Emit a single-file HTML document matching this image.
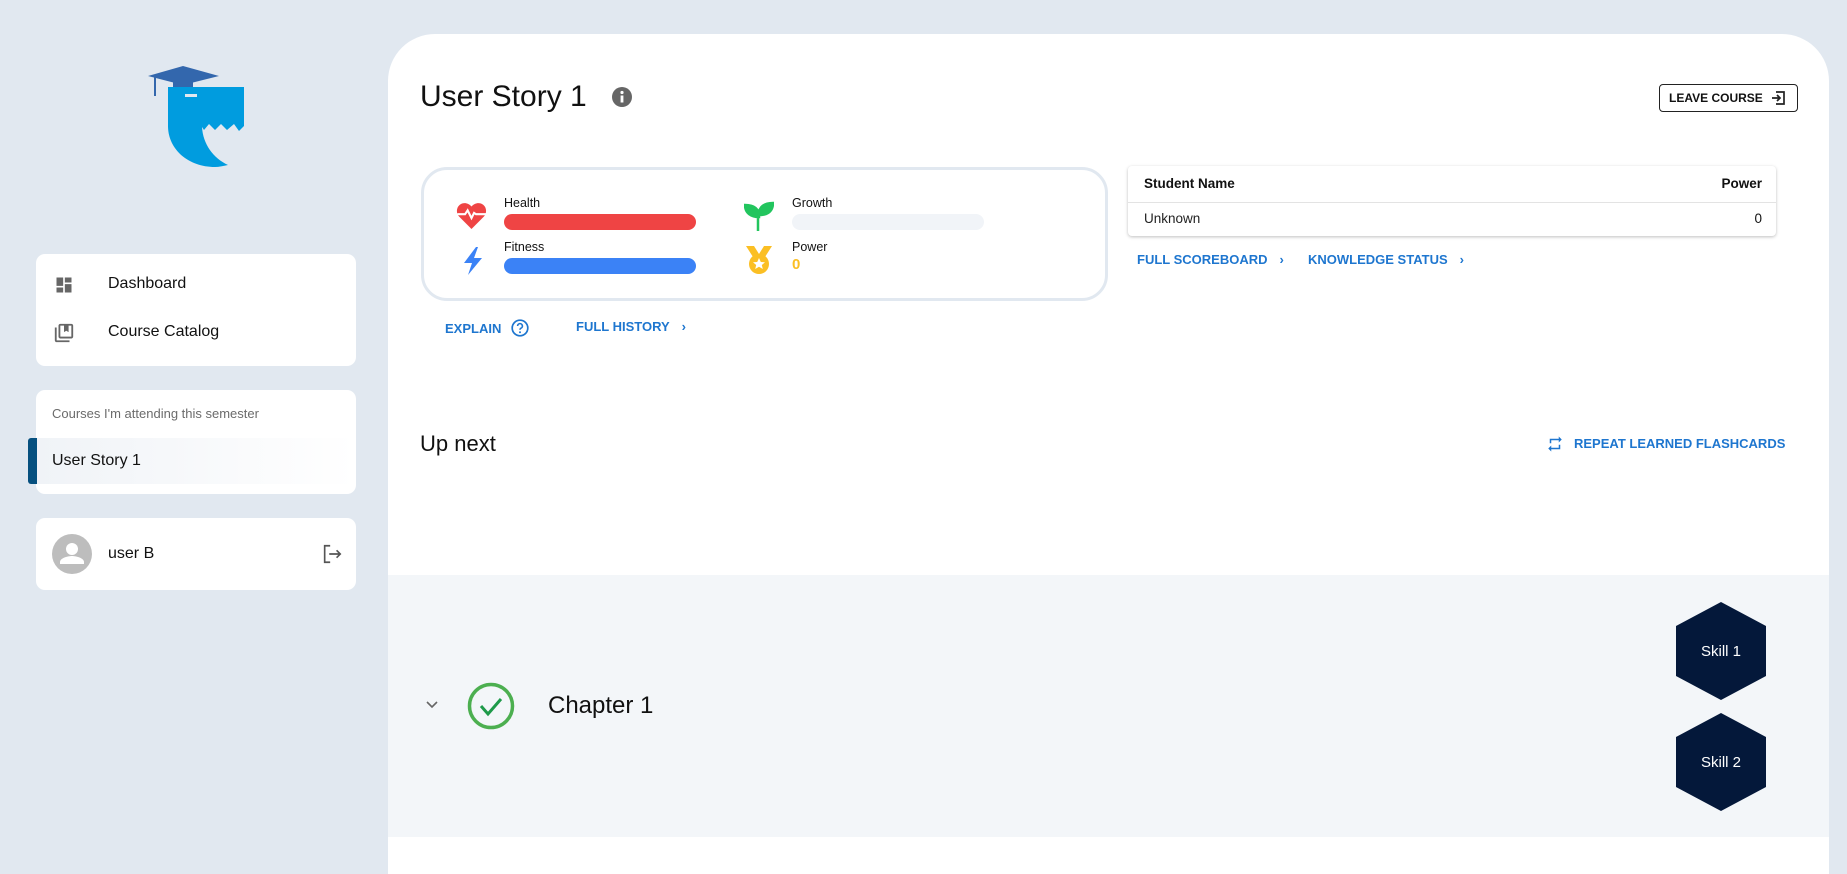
<!DOCTYPE html>
<html><head><meta charset="utf-8"><style>
*{box-sizing:border-box;margin:0;padding:0}
body{width:1847px;height:857px;background:#e1e8f0;font-family:"Liberation Sans",sans-serif;color:#111;position:relative;overflow:hidden}
.abs{position:absolute}
.card{position:absolute;background:#fff;border-radius:9px;left:36px;width:320px}
.nav{position:absolute;left:72px;font-size:16px;color:#111}
.lnk{position:absolute;font-size:13px;font-weight:bold;color:#1e76cf;letter-spacing:0;display:flex;align-items:center;gap:10px}
.lbl{position:absolute;font-size:12.5px;color:#111}
.bar{position:absolute;height:16px;border-radius:8px;width:192px}
</style></head><body>
<svg class="abs" style="left:145px;top:64px" width="102" height="104" viewBox="0 0 102 104">
<polygon points="3,12 38,2 74,12 38,21" fill="#3367ad"/>
<rect x="28" y="12" width="20" height="11" fill="#3367ad"/>
<line x1="10" y1="13" x2="10" y2="32" stroke="#3367ad" stroke-width="2"/>
<path d="M23,23 H99 V62 L94,67 L89,60 L82,66 L76,60 L70,66 L64,60 L59,66 L57,63 C58,80 68,94 83,101 C78,102 74,103 70,103 C43,103 23,85 23,62 Z" fill="#009cdf"/>
<rect x="40" y="30" width="12" height="3" fill="#e1e8f0"/>
</svg>
<div class="card" style="top:254px;height:112px"></div>
<svg class="abs" style="left:54px;top:275px" width="20" height="20" viewBox="0 0 24 24"><path d="M3 13h8V3H3v10zm0 8h8v-6H3v6zm10 0h8V11h-8v10zm0-18v6h8V3h-8z" fill="#666"/></svg>
<div class="nav" style="left:108px;top:275px">Dashboard</div>
<svg class="abs" style="left:53px;top:322px" width="22" height="22" viewBox="0 0 24 24"><path d="M4 6H2v14c0 1.1.9 2 2 2h14v-2H4V6zm16-4H8c-1.1 0-2 .9-2 2v12c0 1.1.9 2 2 2h12c1.1 0 2-.9 2-2V4c0-1.1-.9-2-2-2zm0 14H8V4h4v7l2.5-1.5L17 11V4h3v12z" fill="#666"/></svg>
<div class="nav" style="left:108px;top:323px">Course Catalog</div>
<div class="card" style="top:390px;height:104px"></div>
<div class="abs" style="left:52px;top:406px;font-size:13px;color:#6b6b6b">Courses I'm attending this semester</div>
<div class="abs" style="left:28px;top:438px;width:328px;height:46px;background:linear-gradient(90deg,#f0f3f7,#fff);border-left:9px solid #06507f;border-radius:3px 0 0 3px"></div>
<div class="nav" style="left:52px;top:452px">User Story 1</div>
<div class="card" style="top:518px;height:72px"></div>
<svg class="abs" style="left:52px;top:534px" width="40" height="40" viewBox="0 0 40 40"><circle cx="20" cy="20" r="20" fill="#bdbdbd"/><circle cx="20" cy="15" r="6" fill="#fff"/><path d="M8 28c0-4 8-6 12-6s12 2 12 6v2H8z" fill="#fff"/></svg>
<div class="nav" style="left:108px;top:545px">user B</div>
<svg class="abs" style="left:321px;top:543px" width="22" height="22" viewBox="0 0 24 24"><path d="M10 3H4v18h6M9 12h12M17 8l4 4-4 4" fill="none" stroke="#555" stroke-width="1.8"/></svg>

<div class="abs" style="left:388px;top:34px;width:1441px;height:840px;background:#fff;border-radius:47px 47px 0 0"></div>
<div class="abs" style="left:420px;top:80px;font-size:30px;color:#111">User Story 1</div>
<svg class="abs" style="left:612px;top:87px" width="20" height="20" viewBox="0 0 20 20"><circle cx="10" cy="10" r="10" fill="#666"/><rect x="8.6" y="8.5" width="2.8" height="7" fill="#fff"/><circle cx="10" cy="5.5" r="1.6" fill="#fff"/></svg>
<div class="abs" style="left:1659px;top:84px;width:139px;height:28px;border:1.5px solid #222;border-radius:4px;font-size:12px;font-weight:bold;display:flex;align-items:center;padding-left:9px;gap:8px">LEAVE COURSE<svg width="14" height="14" viewBox="0 0 14 14"><path d="M5 1h8v12H5M1 7h8M6 4l3 3-3 3" fill="none" stroke="#222" stroke-width="1.7"/></svg></div>

<div class="abs" style="left:421px;top:167px;width:687px;height:134px;border:3px solid #e1e8f0;border-radius:26px"></div>
<svg class="abs" style="left:456px;top:202px" width="31" height="27" viewBox="0 0 24 21"><path d="M12 21L2.5 11.5C0 9 0 4.5 2.8 2.2 5.5 0 9.5.5 12 3.5 14.5.5 18.5 0 21.2 2.2 24 4.5 24 9 21.5 11.5z" fill="#ef4444"/><path d="M1 9.5h6l2-3 3 6 2-4 1.5 1h8" fill="none" stroke="#fff" stroke-width="1.6"/></svg>
<div class="lbl" style="left:504px;top:196px">Health</div>
<div class="bar" style="left:504px;top:214px;background:#ef4444"></div>
<svg class="abs" style="left:460px;top:246px" width="26" height="30" viewBox="0 0 26 30"><path d="M16 1L4 17h8l-4 12 14-17h-8l4-11z" fill="#3b82f6"/></svg>
<div class="lbl" style="left:504px;top:240px">Fitness</div>
<div class="bar" style="left:504px;top:258px;background:#3b82f6"></div>
<svg class="abs" style="left:744px;top:200px" width="30" height="32" viewBox="0 0 30 32"><path d="M14 31V17M15 17C15 8 9 5 1 5c0 8 6 12 14 12zM15 14C15 7 20 3 29 3c0 8-5 12-14 12z" fill="#22c55e" stroke="#22c55e" stroke-width="2.5"/></svg>
<div class="lbl" style="left:792px;top:196px">Growth</div>
<div class="bar" style="left:792px;top:214px;background:#f1f4f8"></div>
<svg class="abs" style="left:744px;top:245px" width="30" height="30" viewBox="0 0 30 30"><path d="M2 1h8l5 8 5-8h8l-7 11H9z" fill="#fbbf24"/><circle cx="15" cy="19" r="10" fill="#fbbf24"/><polygon points="15,13 16.8,17 21,17.3 17.8,20 18.8,24 15,21.8 11.2,24 12.2,20 9,17.3 13.2,17" fill="#fff"/></svg>
<div class="lbl" style="left:792px;top:240px">Power</div>
<div class="abs" style="left:792px;top:256px;font-size:15px;font-weight:bold;color:#fbbf24">0</div>
<div class="lnk" style="left:445px;top:319px">EXPLAIN <svg width="18" height="18" viewBox="0 0 18 18"><circle cx="9" cy="9" r="7.8" fill="none" stroke="#1e76cf" stroke-width="1.7"/><path d="M6.6 7a2.4 2.4 0 1 1 3.4 2.2c-.8.4-1 .9-1 1.6" fill="none" stroke="#1e76cf" stroke-width="1.6"/><circle cx="9" cy="13.2" r="1" fill="#1e76cf"/></svg></div>
<div class="lnk" style="left:576px;top:319px">FULL HISTORY <span style="margin-left:2px">›</span></div>

<div class="abs" style="left:1128px;top:166px;width:648px;height:70px;background:#fff;border-radius:4px;box-shadow:0 1px 3px rgba(0,0,0,.25)"></div>
<div class="abs" style="left:1128px;top:202px;width:648px;height:1px;background:#e3e3e3"></div>
<div class="abs" style="left:1144px;top:176px;font-size:13.5px;font-weight:bold">Student Name</div>
<div class="abs" style="left:1700px;top:176px;width:62px;text-align:right;font-size:13.5px;font-weight:bold">Power</div>
<div class="abs" style="left:1144px;top:211px;font-size:13.5px;color:#222">Unknown</div>
<div class="abs" style="left:1700px;top:211px;width:62px;text-align:right;font-size:13.5px">0</div>
<div class="lnk" style="left:1137px;top:252px">FULL SCOREBOARD <span style="margin-left:2px">›</span></div>
<div class="lnk" style="left:1308px;top:252px">KNOWLEDGE STATUS <span style="margin-left:2px">›</span></div>

<div class="abs" style="left:420px;top:431px;font-size:22px">Up next</div>
<svg class="abs" style="left:1546px;top:435px" width="18" height="18" viewBox="0 0 24 24"><path d="M7 7h10v3l4-4-4-4v3H5v6h2V7zm10 10H7v-3l-4 4 4 4v-3h12v-6h-2v4z" fill="#1e76cf"/></svg>
<div class="lnk" style="left:1574px;top:436px">REPEAT LEARNED FLASHCARDS</div>

<div class="abs" style="left:388px;top:575px;width:1441px;height:262px;background:#f3f6f9"></div>
<svg class="abs" style="left:425px;top:700px" width="14" height="10" viewBox="0 0 14 10"><path d="M2 2l5 5 5-5" fill="none" stroke="#666" stroke-width="1.6"/></svg>
<svg class="abs" style="left:467px;top:682px" width="48" height="48" viewBox="0 0 48 48"><circle cx="24" cy="24" r="21.5" fill="none" stroke="#4caf50" stroke-width="3.5"/><path d="M14 24l7 8 13-15" fill="none" stroke="#1e9a4a" stroke-width="3"/></svg>
<div class="abs" style="left:548px;top:692px;font-size:24px;color:#111">Chapter 1</div>
<svg class="abs" style="left:1676px;top:602px" width="90" height="210" viewBox="0 0 90 210">
<polygon points="45,0 90,24 90,74 45,98 0,74 0,24" fill="#04183a"/>
<polygon points="45,111 90,135 90,185 45,209 0,185 0,135" fill="#04183a"/>
<text x="45" y="54" fill="#fff" font-size="15" text-anchor="middle" font-family="Liberation Sans, sans-serif">Skill 1</text>
<text x="45" y="165" fill="#fff" font-size="15" text-anchor="middle" font-family="Liberation Sans, sans-serif">Skill 2</text>
</svg>
</body></html>
